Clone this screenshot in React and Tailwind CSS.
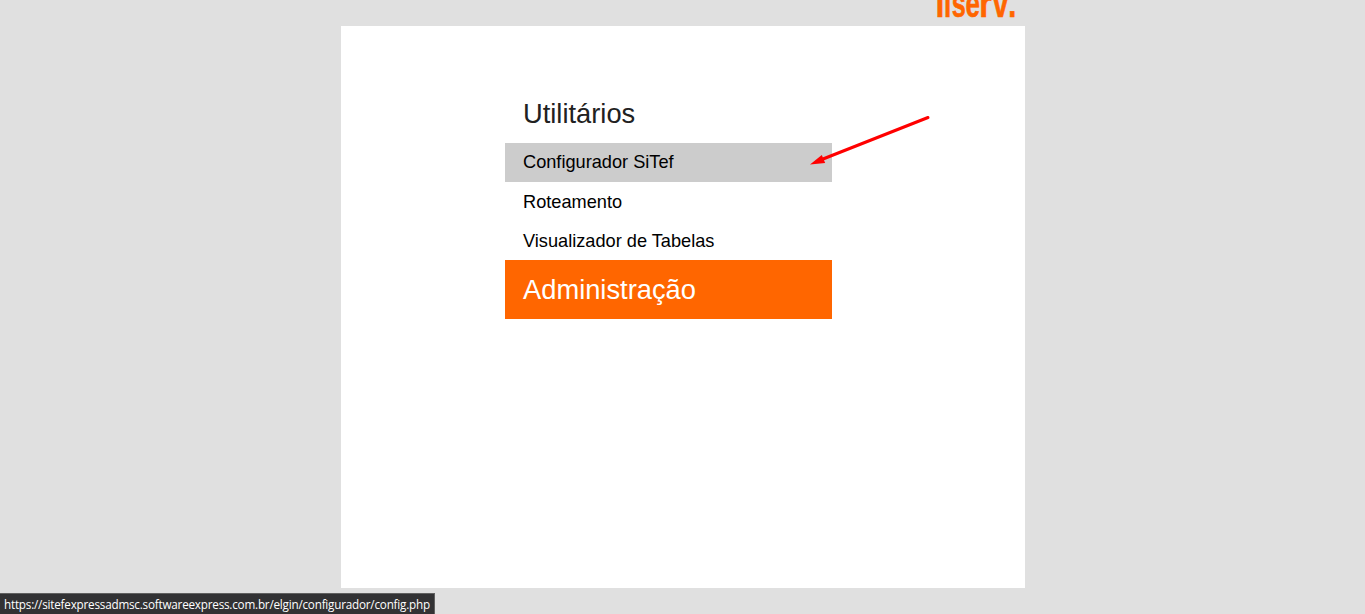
const links = ["Configurador SiTef", "Roteamento", "Visualizador de Tabelas"];

const letters = [
  { ch: "f", x: -0.2, w: 10.6 },
  { ch: "i", x: 9, w: 7.2 },
  { ch: "s", x: 16.8, w: 14 },
  { ch: "e", x: 30.4, w: 14.4 },
  { ch: "r", x: 44.2, w: 12.4 },
  { ch: "v", x: 57.8, w: 15.6 },
  { ch: ".", x: 73.2, w: 8 },
];

function Logo() {
  return (
    <svg
      className="block h-[26px] w-[90px]"
      viewBox="0 0 90 26"
      fill="#ff6600"
      stroke="#ff6600"
      strokeWidth="0.6"
      fontFamily="'Liberation Sans', Arial, sans-serif"
      fontWeight="700"
      fontSize="38"
      aria-label="fiserv."
    >
      {letters.map((l) => (
        <text key={l.ch} x={l.x} y="16.7" textLength={l.w} lengthAdjust="spacingAndGlyphs">
          {l.ch}
        </text>
      ))}
    </svg>
  );
}

export default function App() {
  return (
    <div className="relative flex h-[614px] w-[1365px] flex-col overflow-hidden bg-[#e0e0e0] font-['Liberation_Sans',Arial,sans-serif]">
      <header className="ml-[341px] flex h-[26px] w-[684px] shrink-0 justify-end">
        <Logo />
      </header>
      <main className="ml-[341px] h-[562px] w-[684px] bg-white pt-[58px] pl-[164px]">
        <nav className="w-[327px]">
          <h2 className="h-[59px] pl-[18px] text-[27.3px] leading-[60px] text-[#212121]">Utilitários</h2>
          <ul className="text-[18.2px] text-black">
            {links.map((label, i) => (
              <li
                key={label}
                className={i === 0 ? "h-[39px] bg-[#cccccc] pl-[18px] leading-[39px]" : "h-[39px] pl-[18px] leading-[41px]"}
              >
                <a href="#">{label}</a>
              </li>
            ))}
          </ul>
          <h2 className="h-[59px] bg-[#ff6600] pl-[18px] text-[27.3px] leading-[60px] text-white">Administração</h2>
        </nav>
      </main>
      <svg className="pointer-events-none absolute top-[110px] left-[800px] h-[60px] w-[140px]" viewBox="800 110 140 60">
        <path d="M928 117.5 823 159" stroke="#ff0000" strokeWidth="3" strokeLinecap="round" />
        <path d="M810 164.5 821.8 155 825.2 163Z" fill="#ff0000" />
      </svg>
      <div className="absolute bottom-0 left-0 flex h-[21px] w-[435px] items-center border-t border-r border-[#606060] bg-[#323234] pl-1">
        <span className="font-['Open_Sans','Noto_Sans',sans-serif] text-[11.7px] leading-[16px] tracking-[-0.21px] whitespace-nowrap text-white">
          https://sitefexpressadmsc.softwareexpress.com.br/elgin/configurador/config.php
        </span>
      </div>
    </div>
  );
}
